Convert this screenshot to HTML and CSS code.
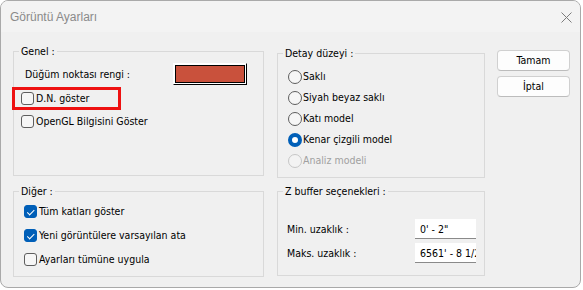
FILE: index.html
```html
<!DOCTYPE html>
<html lang="tr">
<head>
    <meta charset="UTF-8">
    <title>Görüntü Ayarları</title>
    <link rel="stylesheet" href="styles.css">
</head>
<body>
    <div class="window">
        <div class="titlebar">
            <span class="title">Görüntü Ayarları</span>
            <svg class="close" width="11" height="11" viewBox="0 0 11 11">
                <path d="M0.5 0.5 L10.5 10.5 M10.5 0.5 L0.5 10.5" stroke="#7c7c7c" stroke-width="1" fill="none"/>
            </svg>
        </div>

        <div class="dialog-body">
            <div class="column col-left">
                <fieldset class="group group-general">
                    <legend>Genel :</legend>
                    <div class="color-row">
                        <span>Düğüm noktası rengi :</span>
                        <span class="swatch"><span class="swatch-fill"></span></span>
                    </div>
                    <label class="check highlight"><input type="checkbox"> D.N. göster</label>
                    <label class="check check-gl"><input type="checkbox"> OpenGL Bilgisini Göster</label>
                </fieldset>

                <fieldset class="group group-other">
                    <legend>Diğer :</legend>
                    <div class="check-list">
                        <label class="check"><input type="checkbox" checked> Tüm katları göster</label>
                        <label class="check"><input type="checkbox" checked> Yeni görüntülere varsayılan ata</label>
                        <label class="check"><input type="checkbox"> Ayarları tümüne uygula</label>
                    </div>
                </fieldset>
            </div>

            <div class="column col-mid">
                <fieldset class="group group-detail">
                    <legend>Detay düzeyi :</legend>
                    <div class="radio-list">
                        <label class="radio"><input type="radio" name="detail"> Saklı</label>
                        <label class="radio"><input type="radio" name="detail"> Siyah beyaz saklı</label>
                        <label class="radio"><input type="radio" name="detail"> Katı model</label>
                        <label class="radio"><input type="radio" name="detail" checked> Kenar çizgili model</label>
                        <label class="radio disabled"><input type="radio" name="detail" disabled> Analiz modeli</label>
                    </div>
                </fieldset>

                <fieldset class="group group-zbuffer">
                    <legend>Z buffer seçenekleri :</legend>
                    <div class="field-grid">
                        <label for="minDist">Min. uzaklık :</label>
                        <input type="text" id="minDist" value="0' - 2&quot;">
                        <label for="maxDist">Maks. uzaklık :</label>
                        <input type="text" id="maxDist" value="6561' - 8 1/2&quot;">
                    </div>
                </fieldset>
            </div>

            <div class="column col-buttons">
                <button type="button">Tamam</button>
                <button type="button">İptal</button>
            </div>
        </div>
    </div>
</body>
</html>
```

FILE: styles.css
```css
body {
    margin: 0;
    background-color: #fff;
    font-family: "DejaVu Sans Condensed", "DejaVu Sans", sans-serif;
    font-stretch: condensed;
    font-size: 10.5px;
    line-height: 13px;
    color: #000;
}

.window {
    box-sizing: border-box;
    width: 581px;
    height: 288px;
    border: 1px solid #a9a9a9;
    border-radius: 8px;
    background-color: #f0f0f0;
    overflow: hidden;
}

.titlebar {
    display: flex;
    align-items: center;
    justify-content: space-between;
    height: 31px;
    padding: 1px 8px 0 9px;
    box-sizing: border-box;
    background-color: #f3f3f3;
}

.title {
    font-family: "Liberation Sans", Arial, sans-serif;
    font-stretch: normal;
    font-size: 12px;
    color: #8a8a8a;
}

.dialog-body {
    display: flex;
    padding-left: 12px;
}

.column {
    display: flex;
    flex-direction: column;
}

.col-left {
    width: 251px;
    padding-top: 13px;
}

.col-mid {
    width: 208px;
    margin-left: 13px;
    padding-top: 15px;
}

.col-buttons {
    width: 73px;
    margin-left: 12px;
    padding-top: 18px;
    gap: 5px;
}

/* group boxes */
.group {
    box-sizing: border-box;
    margin: 0;
    padding: 0;
    min-width: 0;
    border: 1px solid #d9d9d9;
}

.group legend {
    margin-left: 5px;
    padding: 0 2px;
    line-height: 13px;
}

.group-general { height: 131px; }
.group-other { height: 92px; margin-top: 9px; }
.group-detail { height: 131px; }
.group-zbuffer { height: 91px; margin-top: 7px; }

.color-row {
    display: flex;
    align-items: center;
    height: 22px;
    margin-top: 5px;
    padding: 0 16px 0 11px;
}

.swatch {
    box-sizing: border-box;
    margin-left: auto;
    width: 74px;
    height: 22px;
    padding: 1px;
    background-color: #fff;
    border: 1px solid;
    border-color: #fff #000 #000 #fff;
}

.swatch-fill {
    display: block;
    box-sizing: border-box;
    height: 100%;
    border: 1px solid #000;
    background-color: #c9513c;
}

/* checkboxes */
.check {
    display: flex;
    align-items: center;
    gap: 2px;
    height: 17px;
    white-space: nowrap;
}

.group-general .check {
    margin-top: 5px;
    margin-left: 1px;
    padding-left: 6px;
}

.group-general .check-gl {
    margin-top: 6px;
}

.highlight {
    box-sizing: border-box;
    width: 103px;
    outline: 3px solid #ee1111;
}

.check-list {
    display: flex;
    flex-direction: column;
    gap: 7px;
    margin-top: 5px;
    padding-left: 10px;
}

.check input {
    appearance: none;
    position: relative;
    box-sizing: border-box;
    width: 13px;
    height: 13px;
    margin: 0;
    border: 1px solid #5e5e5e;
    border-radius: 3px;
    background-color: #f6f6f6;
}

.check input:checked {
    border-color: #005fb8;
    background-color: #005fb8;
}

.check input:checked::after {
    content: "";
    position: absolute;
    left: 3.5px;
    top: 1.5px;
    width: 2.5px;
    height: 5.5px;
    border: solid #fff;
    border-width: 0 1.2px 1.2px 0;
    transform: rotate(45deg);
}

/* radios */
.radio-list {
    display: flex;
    flex-direction: column;
    gap: 4px;
    margin-top: 8px;
    padding-left: 10px;
}

.radio {
    display: flex;
    align-items: center;
    gap: 1px;
    height: 17px;
}

.radio input {
    appearance: none;
    box-sizing: border-box;
    width: 14px;
    height: 14px;
    margin: 0;
    border: 1px solid #5e5e5e;
    border-radius: 50%;
    background-color: #f6f6f6;
}

.radio input:checked {
    border: 4px solid #005fb8;
    background-color: #fff;
}

.radio.disabled {
    color: #a0a0a0;
}

.radio input:disabled {
    border-color: #c6c6c6;
    background-color: #f3f3f3;
}

/* z buffer */
.field-grid {
    display: grid;
    grid-template-columns: 128px 61px;
    row-gap: 4px;
    align-items: center;
    margin-top: 21px;
    padding-left: 9px;
}

.field-grid input {
    box-sizing: border-box;
    width: 61px;
    height: 20px;
    padding: 0 0 0 5px;
    border: none;
    border-bottom: 1px solid #8a8a8a;
    background-color: #fff;
    font: inherit;
    color: #000;
}

button {
    box-sizing: border-box;
    height: 21px;
    padding: 0;
    border: 1px solid #d0d0d0;
    border-bottom-color: #bcbcbc;
    border-radius: 4px;
    background-color: #fdfdfd;
    font: inherit;
    color: #000;
}
```
